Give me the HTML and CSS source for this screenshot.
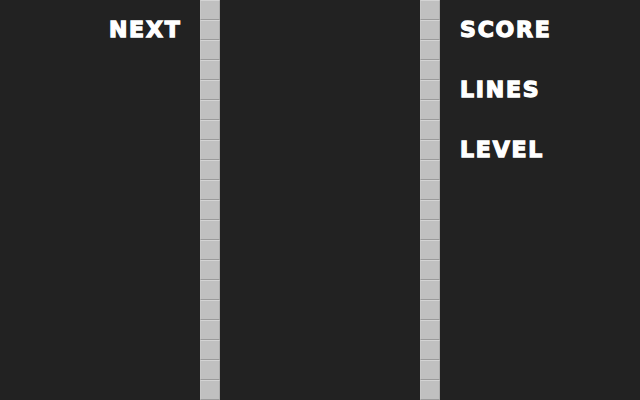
FILE: index.html
```html
<!DOCTYPE html>
<html>
<head>
<meta charset="utf-8">
<link rel="stylesheet" href="styles.css">
</head>
<body>
<div class="game">
  <div class="side left">
    <div class="label next">NEXT</div>
  </div>
  <div class="wall">
    <div class="b"></div><div class="b"></div><div class="b"></div><div class="b"></div><div class="b"></div>
    <div class="b"></div><div class="b"></div><div class="b"></div><div class="b"></div><div class="b"></div>
    <div class="b"></div><div class="b"></div><div class="b"></div><div class="b"></div><div class="b"></div>
    <div class="b"></div><div class="b"></div><div class="b"></div><div class="b"></div><div class="b"></div>
  </div>
  <div class="board"></div>
  <div class="wall">
    <div class="b"></div><div class="b"></div><div class="b"></div><div class="b"></div><div class="b"></div>
    <div class="b"></div><div class="b"></div><div class="b"></div><div class="b"></div><div class="b"></div>
    <div class="b"></div><div class="b"></div><div class="b"></div><div class="b"></div><div class="b"></div>
    <div class="b"></div><div class="b"></div><div class="b"></div><div class="b"></div><div class="b"></div>
  </div>
  <div class="side right">
    <div class="label">SCORE</div>
    <div class="label">LINES</div>
    <div class="label">LEVEL</div>
  </div>
</div>
</body>
</html>
```
FILE: styles.css
```css
html, body {
  margin: 0;
  padding: 0;
  background: #222222;
}
.game {
  display: flex;
  width: 640px;
  height: 400px;
  overflow: hidden;
}
.side {
  width: 200px;
  display: flex;
  flex-direction: column;
  box-sizing: border-box;
}
.left {
  align-items: flex-end;
  padding: 17px 18.5px 0 0;
}
.right {
  padding: 17px 0 0 20px;
  gap: 34px;
}
.label {
  font-family: "DejaVu Sans", Verdana, sans-serif;
  font-weight: bold;
  font-size: 22px;
  line-height: 26px;
  letter-spacing: 1.8px;
  -webkit-text-stroke: 1.3px #ffffff;
  color: #ffffff;
}
.wall {
  width: 20px;
  display: flex;
  flex-direction: column;
}
.b {
  width: 20px;
  height: 20px;
  box-sizing: border-box;
  background: #c0c0c0;
  border-top: 1px solid #d4d4d4;
  border-bottom: 1px solid #9a9a9a;
  border-left: 1px solid #c8c8c8;
  border-right: 1px solid #acacac;
  flex: none;
}
.board {
  width: 200px;
}
```
